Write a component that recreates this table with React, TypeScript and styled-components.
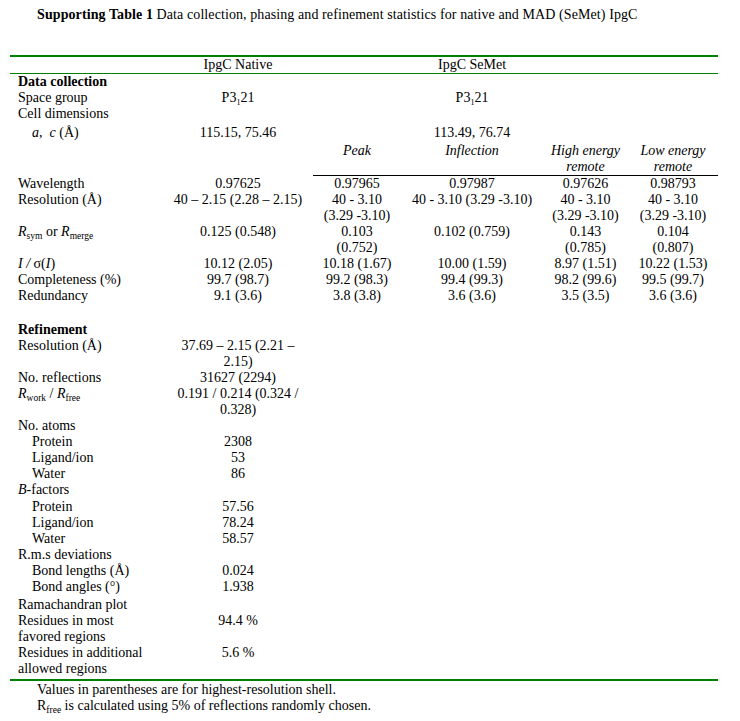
import React from "react";
import styled, { createGlobalStyle } from "styled-components";

const Global = createGlobalStyle`
  html, body { margin: 0; padding: 0; background: #ffffff; }
  body {
    font-family: "Liberation Serif", "Times New Roman", serif;
    font-size: 14px;
    line-height: 16.1px;
    color: #000000;
  }
`;

const COLS = "153px 150px 88px 142px 85px 90px";

const Page = styled.div`
  width: 740px;
  padding-top: 7px;
`;

const Title = styled.p`
  margin: 0 0 32px 37px;
  white-space: nowrap;
  letter-spacing: 0.09px;
`;

const Strong = styled.span`
  font-weight: 700;
`;

const Table = styled.div`
  margin-left: 10px;
  width: 708px;
  display: flex;
  flex-direction: column;
`;

const Rule = styled.div<{ $weight: number; $color: string }>`
  height: ${(p) => p.$weight}px;
  background: ${(p) => p.$color};
`;

const Row = styled.div<{ $mt?: number }>`
  display: grid;
  grid-template-columns: ${COLS};
  margin-top: ${(p) => p.$mt ?? 0}px;
`;

const SpanRule = styled.div`
  grid-column: 3 / -1;
  height: 1px;
  background: #000000;
`;

const FullRule = styled.div`
  grid-column: 1 / -1;
  height: 2px;
  background: #008000;
`;

const Label = styled.div<{ $indent?: boolean; $bold?: boolean }>`
  padding-left: ${(p) => (p.$indent ? 22 : 8)}px;
  font-weight: ${(p) => (p.$bold ? 700 : 400)};
  white-space: nowrap;
`;

const Cell = styled.div<{ $italic?: boolean }>`
  text-align: center;
  white-space: nowrap;
  font-style: ${(p) => (p.$italic ? "italic" : "normal")};
`;

const Var = styled.span`
  font-style: italic;
`;

const Sub = styled.span<{ $size?: number }>`
  font-size: ${(p) => p.$size ?? 9.5}px;
  position: relative;
  top: 3px;
  line-height: 0;
  vertical-align: baseline;
  font-style: normal;
`;

const Notes = styled.div`
  padding-left: 37px;
  padding-top: 1px;
`;

const Note = styled.p`
  margin: 0;
  white-space: nowrap;
`;

type Val = React.ReactNode | string[];

interface RowData {
  label: React.ReactNode | string[];
  indent?: boolean;
  bold?: boolean;
  mt?: number;
  italic?: boolean;
  cells?: Val[];
}

const P3121 = (
  <>
    P3<Sub $size={8}>1</Sub>21
  </>
);

const lines = (v: Val) =>
  Array.isArray(v)
    ? v.map((t, i) => (
        <React.Fragment key={i}>
          {i > 0 && <br />}
          {t}
        </React.Fragment>
      ))
    : v;

const top: RowData[] = [
  { label: "Data collection", bold: true },
  { label: "Space group", cells: [P3121, null, P3121] },
  { label: "Cell dimensions" },
  {
    label: (
      <>
        <Var>a</Var>,&nbsp; <Var>c</Var> (Å)
      </>
    ),
    indent: true,
    mt: 3,
    cells: ["115.15, 75.46", null, "113.49, 76.74"],
  },
  {
    label: "",
    italic: true,
    mt: 1,
    cells: [null, "Peak", "Inflection", ["High energy", "remote"], ["Low energy", "remote"]],
  },
];

const collection: RowData[] = [
  { label: "Wavelength", cells: ["0.97625", "0.97965", "0.97987", "0.97626", "0.98793"] },
  {
    label: "Resolution (Å)",
    cells: [
      "40 – 2.15 (2.28 – 2.15)",
      ["40 - 3.10", "(3.29 -3.10)"],
      "40 - 3.10 (3.29 -3.10)",
      ["40 - 3.10", "(3.29 -3.10)"],
      ["40 - 3.10", "(3.29 -3.10)"],
    ],
  },
  {
    label: (
      <>
        <Var>R</Var>
        <Sub>sym</Sub> or <Var>R</Var>
        <Sub>merge</Sub>
      </>
    ),
    cells: [
      "0.125 (0.548)",
      ["0.103", "(0.752)"],
      "0.102 (0.759)",
      ["0.143", "(0.785)"],
      ["0.104", "(0.807)"],
    ],
  },
  {
    label: (
      <>
        <Var>I</Var> <Var>/</Var> σ(<Var>I</Var>)
      </>
    ),
    cells: ["10.12 (2.05)", "10.18 (1.67)", "10.00 (1.59)", "8.97 (1.51)", "10.22 (1.53)"],
  },
  { label: "Completeness (%)", cells: ["99.7 (98.7)", "99.2 (98.3)", "99.4 (99.3)", "98.2 (99.6)", "99.5 (99.7)"] },
  { label: "Redundancy", cells: ["9.1 (3.6)", "3.8 (3.8)", "3.6 (3.6)", "3.5 (3.5)", "3.6 (3.6)"] },
  { label: "Refinement", bold: true, mt: 17 },
  { label: "Resolution (Å)", cells: [["37.69 – 2.15 (2.21 –", "2.15)"]] },
  { label: "No. reflections", cells: ["31627 (2294)"] },
  {
    label: (
      <>
        <Var>R</Var>
        <Sub>work</Sub> / <Var>R</Var>
        <Sub>free</Sub>
      </>
    ),
    cells: [["0.191 / 0.214 (0.324 /", "0.328)"]],
  },
  { label: "No. atoms" },
  { label: "Protein", indent: true, cells: ["2308"] },
  { label: "Ligand/ion", indent: true, cells: ["53"] },
  { label: "Water", indent: true, cells: ["86"] },
  {
    label: (
      <>
        <Var>B</Var>-factors
      </>
    ),
  },
  { label: "Protein", indent: true, cells: ["57.56"] },
  { label: "Ligand/ion", indent: true, cells: ["78.24"] },
  { label: "Water", indent: true, cells: ["58.57"] },
  { label: "R.m.s deviations" },
  { label: "Bond lengths (Å)", indent: true, cells: ["0.024"] },
  { label: "Bond angles (°)", indent: true, cells: ["1.938"] },
  { label: "Ramachandran plot", mt: 2 },
  { label: ["Residues in most", "favored regions"], cells: ["94.4 %"] },
  { label: ["Residues in additional", "allowed regions"], cells: ["5.6 %"] },
];

const renderRow = (r: RowData, i: number) => {
  const cells = r.cells ?? [];
  return (
    <Row key={i} $mt={r.mt}>
      <Label $indent={r.indent} $bold={r.bold}>
        {lines(r.label as Val)}
      </Label>
      {[0, 1, 2, 3, 4].map((c) => (
        <Cell key={c} $italic={r.italic}>
          {cells[c] != null ? lines(cells[c]) : null}
        </Cell>
      ))}
    </Row>
  );
};

export default function App() {
  return (
    <Page>
      <Global />
      <Title>
        <Strong>Supporting Table 1</Strong> Data collection, phasing and refinement statistics for native and MAD
        (SeMet) IpgC
      </Title>
      <Table>
        <Rule $weight={2} $color="#008000" />
        <Row>
          <Label />
          <Cell>IpgC Native</Cell>
          <Cell />
          <Cell>IpgC SeMet</Cell>
          <Cell />
          <Cell />
        </Row>
        <Rule $weight={1} $color="#008000" />
        {top.map(renderRow)}
        <Row>
          <SpanRule />
        </Row>
        {collection.map(renderRow)}
        <Row $mt={1}>
          <FullRule />
        </Row>
      </Table>
      <Notes>
        <Note>Values in parentheses are for highest-resolution shell.</Note>
        <Note>
          R<Sub>free</Sub> is calculated using 5% of reflections randomly chosen.
        </Note>
      </Notes>
    </Page>
  );
}
